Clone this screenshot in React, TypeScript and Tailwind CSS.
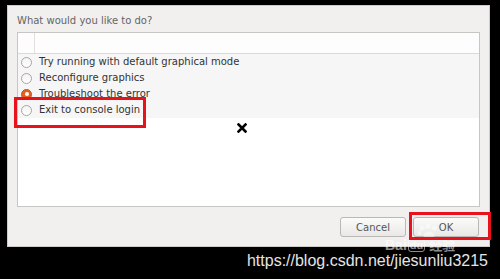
import React from "react";

function Radio({ checked }: { checked?: boolean }) {
  if (checked) {
    return (
      <span className="w-[11px] h-[11px] rounded-full bg-[#e4621f] border border-[#c4501a] flex items-center justify-center shrink-0">
        <span className="w-[4px] h-[4px] rounded-full bg-white" />
      </span>
    );
  }
  return (
    <span className="w-[11px] h-[11px] rounded-full border border-[#a9a7a3] bg-gradient-to-b from-[#f4f3f2] to-[#ffffff] shrink-0" />
  );
}

const rows = [
  { label: "Try running with default graphical mode" },
  { label: "Reconfigure graphics" },
  { label: "Troubleshoot the error", checked: true },
  { label: "Exit to console login" },
];

export default function App() {
  return (
    <div className="w-[500px] h-[279px] bg-black relative overflow-hidden font-['DejaVu_Sans',sans-serif]">
      <div className="pl-[7px] pt-[5px]">
        <div className="w-[483px] h-[242px] border border-[#cfcdca] bg-[#f1f0ee] flex flex-col px-[9px]">
          <div className="h-[26px] flex items-center pt-[3px] text-[10px] text-[#656565]">
            What would you like to do?
          </div>
          <div className="h-[175px] border border-[#c8c6c3] bg-white flex flex-col">
            <div className="h-[21px] border-b border-[#dcdad7] bg-[#fdfdfd] flex shrink-0">
              <div className="w-[17px] border-r border-[#e2e0dd]" />
            </div>
            <div className="bg-[#f6f6f6] flex flex-col">
              {rows.map((r) => (
                <div key={r.label} className="h-[16px] flex items-center pl-[3px] gap-[7px] text-[10px] text-[#333]">
                  <Radio checked={r.checked} />
                  <span className="leading-none">{r.label}</span>
                </div>
              ))}
            </div>
          </div>
          <div className="flex justify-end gap-[7px] mt-[10px] pr-[1px]">
            <button className="w-[66px] h-[20px] rounded-[3px] border border-[#bab8b4] bg-gradient-to-b from-[#fbfbfa] to-[#e9e8e6] text-[10px] text-[#555]">
              Cancel
            </button>
            <button className="w-[66px] h-[20px] rounded-[3px] border border-[#bab8b4] bg-gradient-to-b from-[#fbfbfa] to-[#e9e8e6] text-[10px] text-[#555]">
              OK
            </button>
          </div>
        </div>
      </div>
      <div className="mt-[6px] pr-[12px] text-right font-['Liberation_Sans',sans-serif] text-[16px] leading-none text-[#e4e4e4]">
        https://blog.csdn.net/jiesunliu3215
      </div>

      {/* Baidu watermark */}
      <div className="absolute left-[385px] top-[238px] flex items-center gap-[1px] text-white/55 font-['Liberation_Sans','Noto_Sans_CJK_SC',sans-serif] font-bold text-[14px] leading-none">
        <span>Bai</span>
        <span className="border border-white/55 rounded-[3px] px-[1px] text-[11px] leading-none">du</span>
        <span className="text-[13px] ml-[3px]">经验</span>
      </div>
      <div className="absolute left-[416px] top-[223px] w-[24px] h-[17px] opacity-45">
        <svg width="24" height="17" viewBox="0 0 24 17">
          <circle cx="6" cy="5" r="2.6" fill="#fff" />
          <circle cx="12" cy="3" r="2.6" fill="#fff" />
          <circle cx="18.5" cy="5" r="2.6" fill="#fff" />
          <circle cx="3.5" cy="10" r="2.2" fill="#fff" />
          <ellipse cx="13" cy="12.5" rx="5.5" ry="4" fill="#fff" />
        </svg>
      </div>

      {/* annotation boxes */}
      <div className="absolute left-[14px] top-[97px] w-[132px] h-[31px] border-[3px] border-[#e8121c]" />
      <div className="absolute left-[409px] top-[212px] w-[82px] h-[28px] border-[3px] border-[#e8121c]" />

      {/* cursor */}
      <svg className="absolute left-[237px] top-[123px]" width="10" height="10" viewBox="0 0 10 10">
        <path d="M1.5 1.5 L8.5 8.5 M8.5 1.5 L1.5 8.5" stroke="#000" strokeWidth="2.6" strokeLinecap="square" />
      </svg>
    </div>
  );
}
